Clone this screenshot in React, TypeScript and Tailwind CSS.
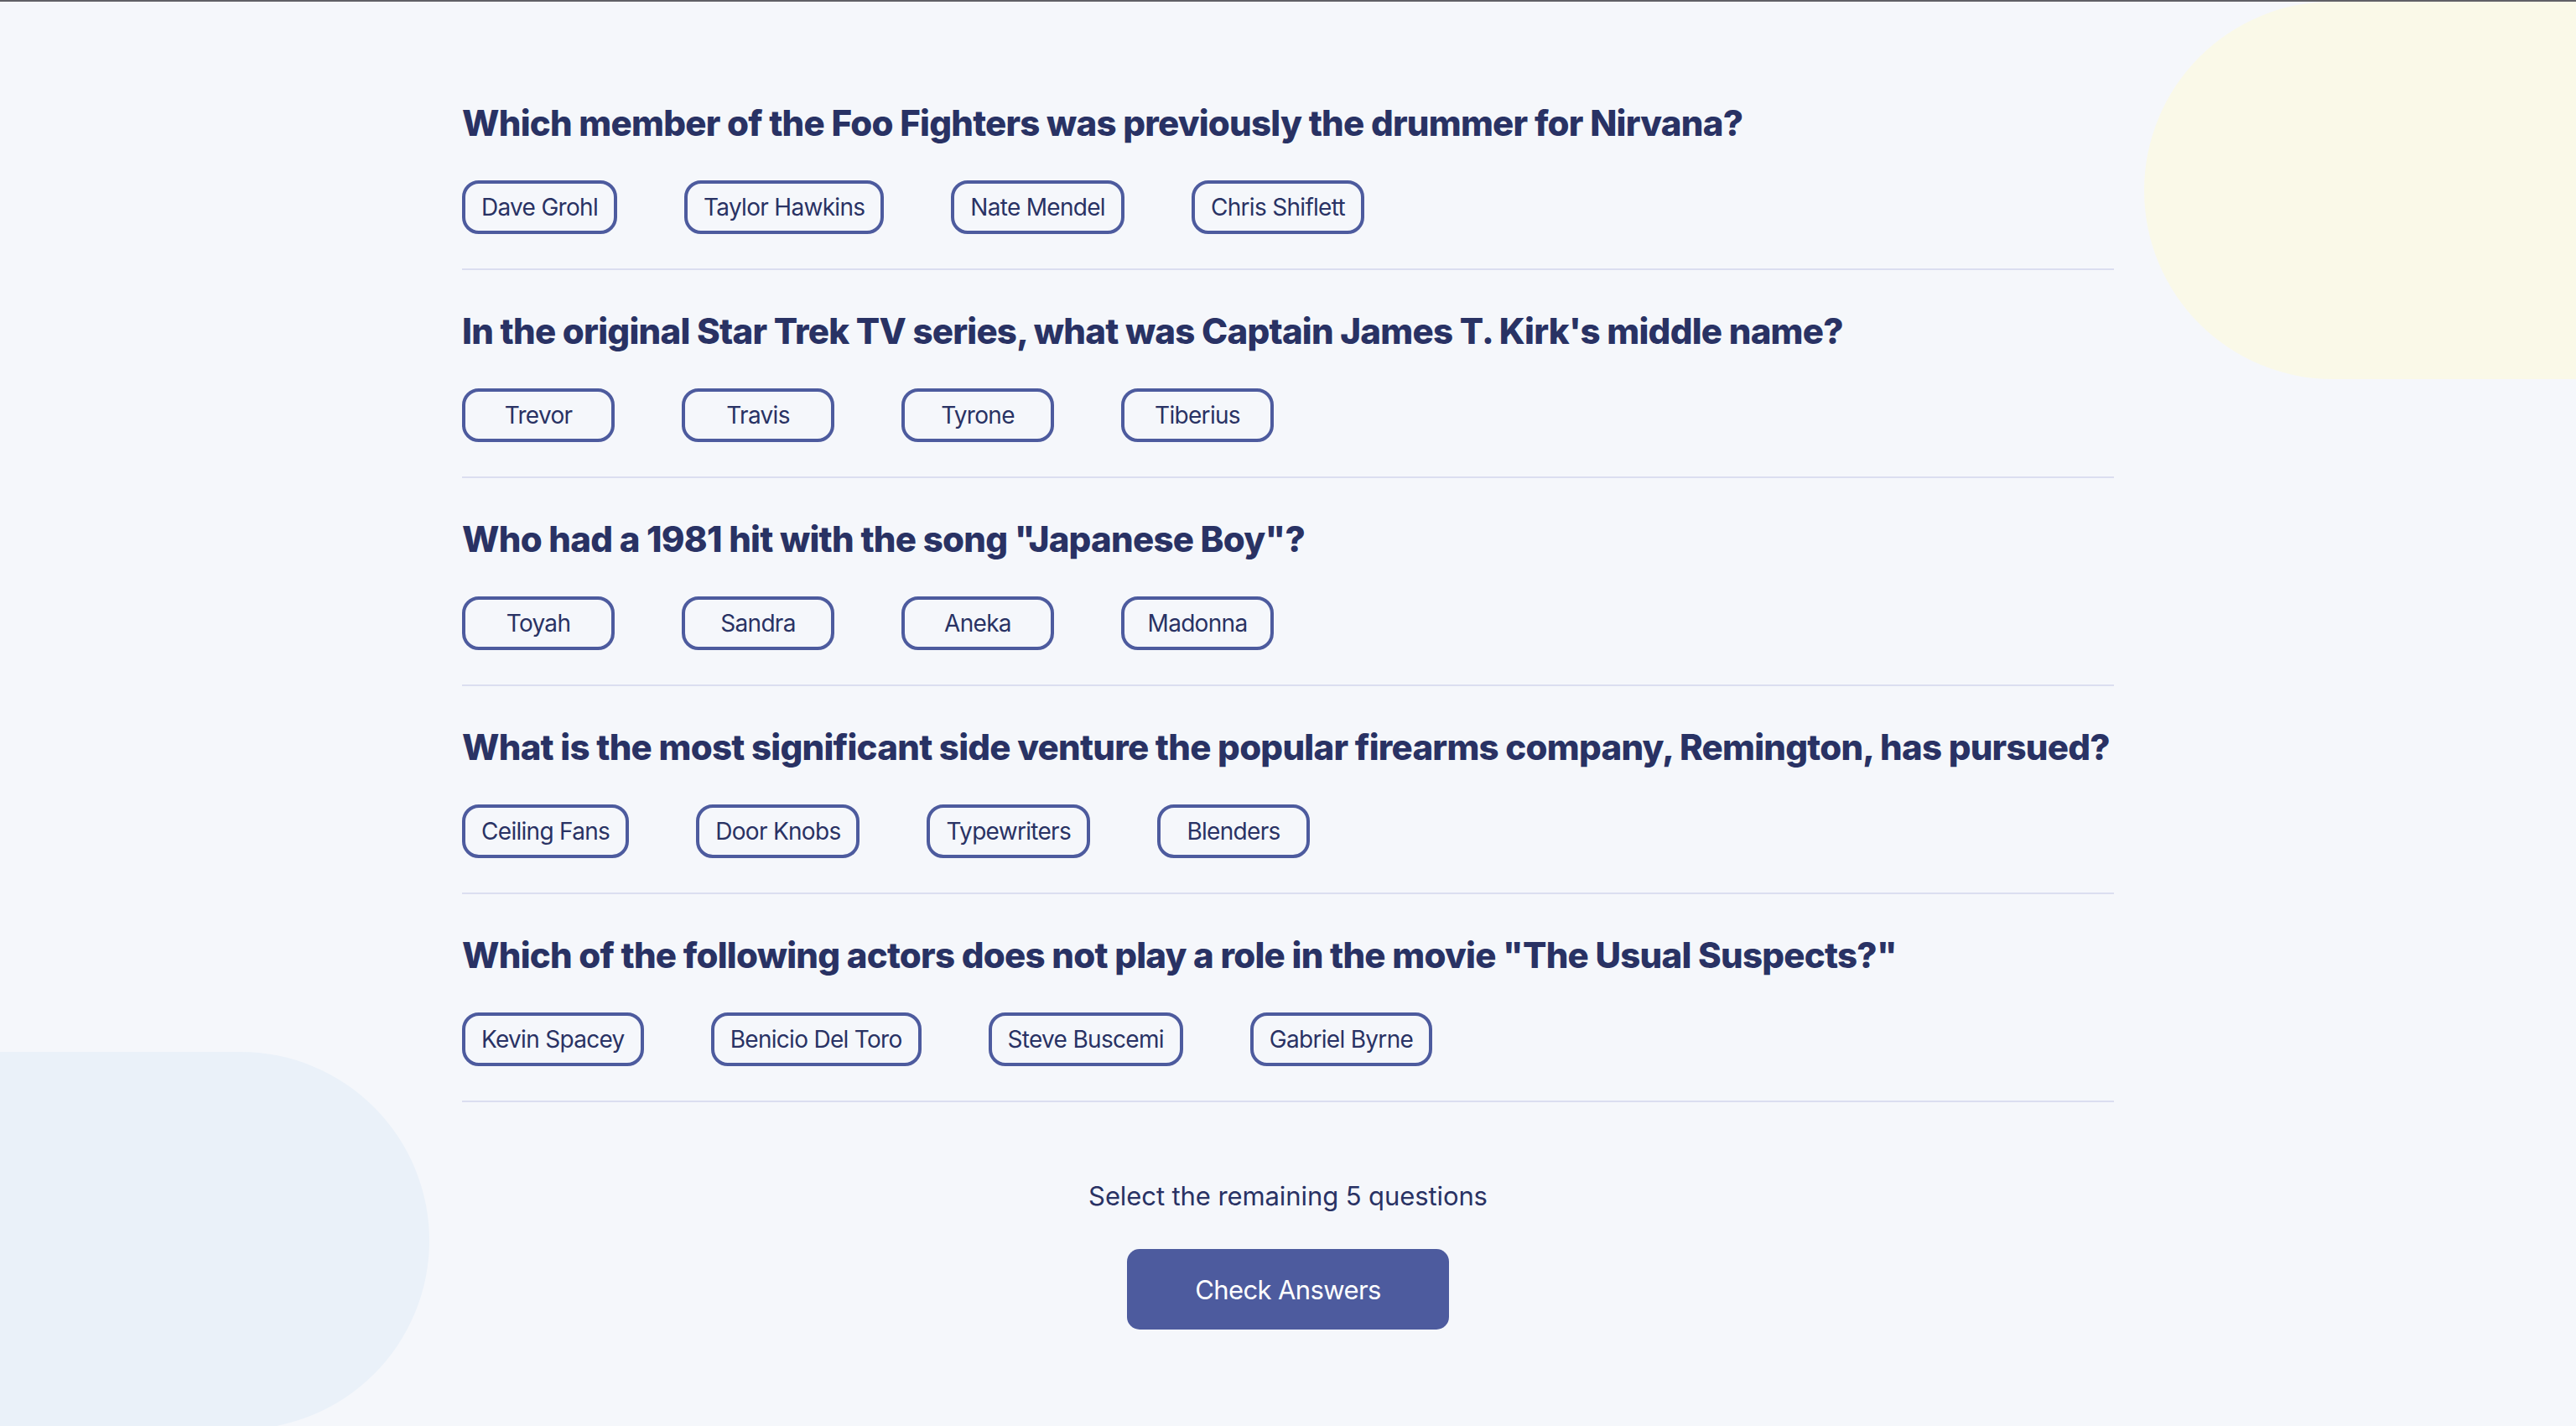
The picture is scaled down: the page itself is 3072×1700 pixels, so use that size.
const questions = [
  {
    question: 'Which member of the Foo Fighters was previously the drummer for Nirvana?',
    answers: ['Dave Grohl', 'Taylor Hawkins', 'Nate Mendel', 'Chris Shiflett'],
  },
  {
    question: "In the original Star Trek TV series, what was Captain James T. Kirk's middle name?",
    answers: ['Trevor', 'Travis', 'Tyrone', 'Tiberius'],
  },
  {
    question: 'Who had a 1981 hit with the song "Japanese Boy"?',
    answers: ['Toyah', 'Sandra', 'Aneka', 'Madonna'],
  },
  {
    question: 'What is the most significant side venture the popular firearms company, Remington, has pursued?',
    answers: ['Ceiling Fans', 'Door Knobs', 'Typewriters', 'Blenders'],
  },
  {
    question: 'Which of the following actors does not play a role in the movie "The Usual Suspects?"',
    answers: ['Kevin Spacey', 'Benicio Del Toro', 'Steve Buscemi', 'Gabriel Byrne'],
  },
];

function Question({ question, answers }: { question: string; answers: string[] }) {
  return (
    <section className="border-b-2 border-[#DBDEF0] pt-[52px] pb-[41px]">
      <h2 className="text-[42px] leading-none font-extrabold tracking-[-0.018em] text-[#293264]">
        {question}
      </h2>
      <div className="mt-[47px] flex gap-[80px]">
        {answers.map((answer) => (
          <button
            key={answer}
            className="h-[64px] min-w-[182px] px-[19px] rounded-[20px] border-[4px] border-[#4D5B9E] text-[28px] leading-none tracking-[-0.025em] text-[#293264]"
          >
            {answer}
          </button>
        ))}
      </div>
    </section>
  );
}

export default function App() {
  return (
    <div
      className="relative min-h-screen overflow-hidden border-t-2 border-[#606066] bg-[#F5F7FB]"
      style={{ fontFamily: 'Inter, "Noto Sans", sans-serif' }}
    >
      {/* decorative blobs */}
      <div className="absolute top-0 right-0 w-[515px] h-[450px] rounded-l-[225px] bg-[#FAF9E8]" />
      <div className="absolute left-0 top-[1252px] w-[512px] h-[450px] rounded-r-[225px] bg-[#EAF1F9]" />

      <main className="relative mx-auto w-[1970px] pt-[72px] pb-[100px]">
        {questions.map((q) => (
          <Question key={q.question} question={q.question} answers={q.answers} />
        ))}

        <div className="mt-[96px] flex flex-col items-center">
          <p className="text-[31px] leading-none tracking-[-0.003em] text-[#293264]">
            Select the remaining 5 questions
          </p>
          <button className="mt-[48px] w-[384px] h-[96px] rounded-[15px] bg-[#4D5B9E] text-[31px] leading-none tracking-[-0.02em] text-white">
            Check Answers
          </button>
        </div>
      </main>
    </div>
  );
}
